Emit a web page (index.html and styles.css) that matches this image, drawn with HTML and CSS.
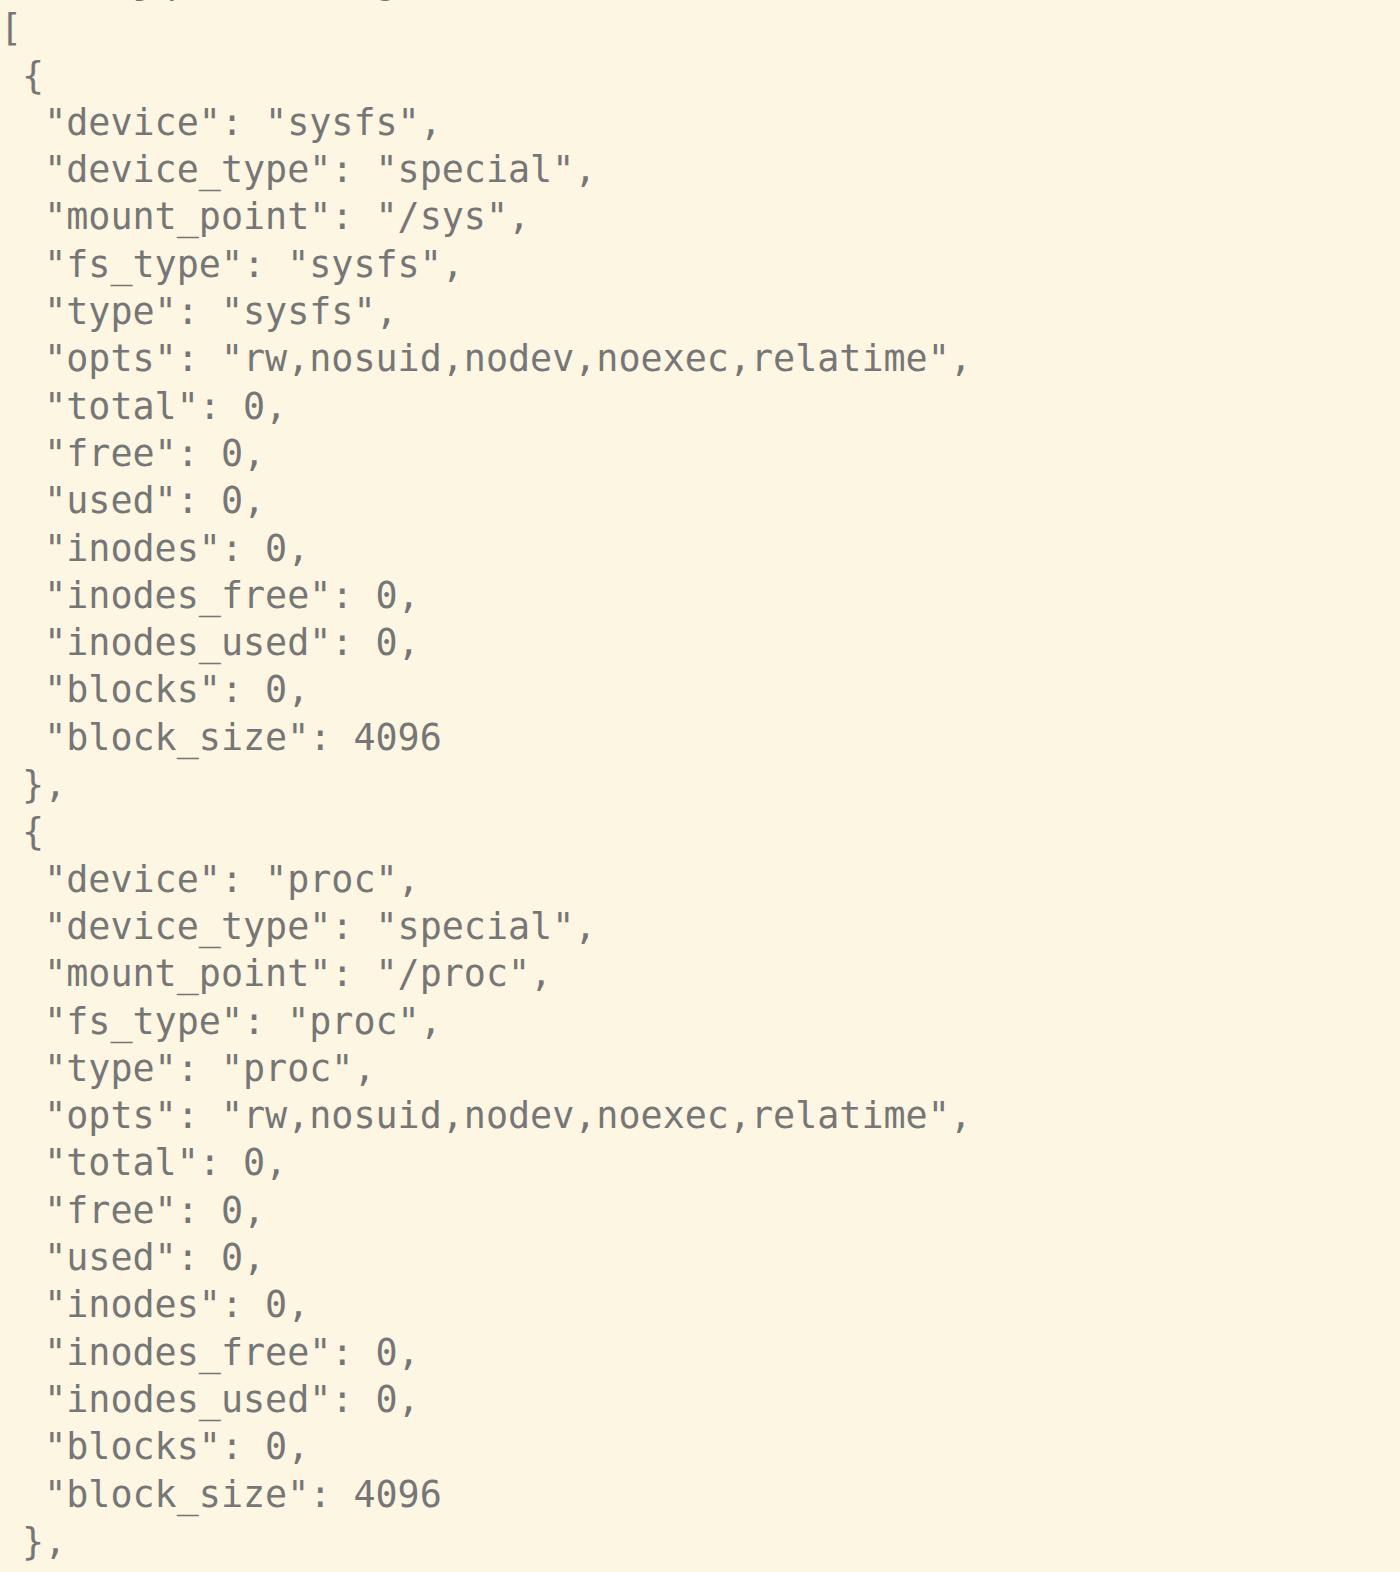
FILE: index.html
```html
<!DOCTYPE html>
<html>
<head>
<meta charset="utf-8">
<link rel="stylesheet" href="styles.css">
</head>
<body>
<pre class="json">$ cat jq/mount.log
[
 {
  "device": "sysfs",
  "device_type": "special",
  "mount_point": "/sys",
  "fs_type": "sysfs",
  "type": "sysfs",
  "opts": "rw,nosuid,nodev,noexec,relatime",
  "total": 0,
  "free": 0,
  "used": 0,
  "inodes": 0,
  "inodes_free": 0,
  "inodes_used": 0,
  "blocks": 0,
  "block_size": 4096
 },
 {
  "device": "proc",
  "device_type": "special",
  "mount_point": "/proc",
  "fs_type": "proc",
  "type": "proc",
  "opts": "rw,nosuid,nodev,noexec,relatime",
  "total": 0,
  "free": 0,
  "used": 0,
  "inodes": 0,
  "inodes_free": 0,
  "inodes_used": 0,
  "blocks": 0,
  "block_size": 4096
 },
 {
  "device": "devtmpfs",
</pre>
</body>
</html>
```

FILE: styles.css
```css
html, body {
  margin: 0;
  padding: 0;
  background: #fdf6e3;
  height: 100%;
  overflow: hidden;
}
.json {
  margin: -43px 0 0 0;
  padding: 0;
  font-family: "DejaVu Sans Mono", monospace;
  font-size: 36.7px;
  line-height: 47.3px;
  color: #767676;
  white-space: pre;
}
```
